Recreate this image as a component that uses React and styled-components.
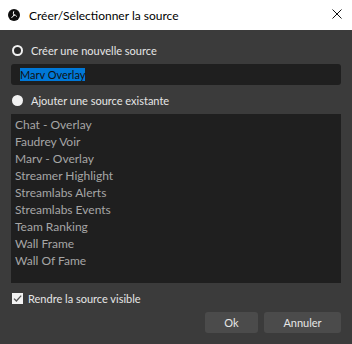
import React from "react";
import styled, { createGlobalStyle } from "styled-components";

const sources = [
	"Chat - Overlay",
	"Faudrey Voir",
	"Marv - Overlay",
	"Streamer Highlight",
	"Streamlabs Alerts",
	"Streamlabs Events",
	"Team Ranking",
	"Wall Frame",
	"Wall Of Fame",
];

const ObsLogo = () => (
	<svg width="12" height="12" viewBox="0 0 12 12">
		<circle cx="6" cy="6" r="6" fill="#0d0d0d" />
		<g stroke="#fff" strokeWidth="1" fill="none" strokeLinecap="round">
			<path d="M6 6 Q4.6 4.2 5.6 2.6" />
			<path d="M6 6 Q7.6 5.6 8.6 7.2" />
			<path d="M6 6 Q5.6 7.8 3.8 8.4" />
		</g>
	</svg>
);

const CloseIcon = () => (
	<svg width="10" height="10" viewBox="0 0 10 10">
		<path d="M0.5 0.5 L9.5 9.5 M9.5 0.5 L0.5 9.5" stroke="#111" strokeWidth="1" />
	</svg>
);

const App = () => {
	return (
		<>
			<GlobalStyle />
			<Dialog>
				<TitleBar>
					<ObsLogo />
					<Title>Créer/Sélectionner la source</Title>
					<CloseButton>
						<CloseIcon />
					</CloseButton>
				</TitleBar>
				<Body>
					<OptionRow>
						<Radio $checked />
						<Label>Créer une nouvelle source</Label>
					</OptionRow>
					<NameField>
						<Selected>Marv Overlay</Selected>
					</NameField>
					<OptionRow>
						<Radio />
						<Label>Ajouter une source existante</Label>
					</OptionRow>
					<SourceList>
						{sources.map((s) => (
							<SourceItem key={s}>{s}</SourceItem>
						))}
					</SourceList>
					<CheckRow>
						<CheckBox>
							<svg width="11" height="11" viewBox="0 0 11 11">
								<path d="M2 5.6 L4.4 8 L9.2 2.6" stroke="#555" strokeWidth="1.3" fill="none" />
							</svg>
						</CheckBox>
						<Label>Rendre la source visible</Label>
					</CheckRow>
					<Buttons>
						<Button $w={53}>Ok</Button>
						<Button $w={77}>Annuler</Button>
					</Buttons>
				</Body>
			</Dialog>
		</>
	);
};

const GlobalStyle = createGlobalStyle`
	body {
		margin: 0;
		background: #3b3b3b;
		font-family: Lato, "Open Sans", sans-serif;
	}
`;
const Dialog = styled.div`
	width: 352px;
	height: 344px;
	display: flex;
	flex-direction: column;
	background: #3b3b3b;
`;
const TitleBar = styled.div`
	height: 30px;
	background: #fff;
	display: flex;
	align-items: center;
	padding: 0 10px 0 8px;
	box-sizing: border-box;
`;
const Title = styled.span`
	margin-left: 9px;
	font-size: 12px;
	color: #000;
	flex: 1;
`;
const CloseButton = styled.span`
	display: flex;
	margin-top: -2px;
`;
const Body = styled.div`
	flex: 1;
	display: flex;
	flex-direction: column;
	padding: 10px 11px 11px;
`;
const OptionRow = styled.div`
	height: 20px;
	display: flex;
	align-items: center;
	gap: 8px;
	padding-left: 1px;
`;
const Radio = styled.span`
	width: 11px;
	height: 11px;
	border-radius: 50%;
	box-sizing: border-box;
	background: ${(p) => (p.$checked ? "#2a2a2a" : "#f2f2f2")};
	border: ${(p) => (p.$checked ? "2.5px solid #f2f2f2" : "none")};
`;
const Label = styled.span`
	font-size: 11px;
	color: #e6e6e6;
`;
const NameField = styled.div`
	height: 21px;
	margin: 4px 0 5px;
	background: #1f1f1f;
	border-radius: 3px;
	display: flex;
	align-items: center;
	padding-left: 9px;
`;
const Selected = styled.span`
	background: #0078d7;
	color: #111;
	font-size: 11px;
	line-height: 13px;
`;
const SourceList = styled.div`
	height: 169px;
	margin-top: 4px;
	background: #1f1f1f;
	padding: 2px 4px;
	box-sizing: border-box;
`;
const SourceItem = styled.div`
	height: 17px;
	line-height: 17px;
	font-size: 12px;
	color: #a6a6a6;
`;
const CheckRow = styled.div`
	height: 20px;
	margin-top: 5px;
	display: flex;
	align-items: center;
	gap: 5px;
	padding-left: 1px;
`;
const CheckBox = styled.span`
	width: 11px;
	height: 11px;
	background: #f2f2f2;
	display: flex;
`;
const Buttons = styled.div`
	margin-top: auto;
	display: flex;
	justify-content: flex-end;
	gap: 6px;
`;
const Button = styled.button`
	width: ${(p) => p.$w}px;
	height: 21px;
	border: none;
	border-radius: 3px;
	background: #4b4b4b;
	color: #e6e6e6;
	font-family: inherit;
	font-size: 11px;
	padding: 0;
`;

export default App;
